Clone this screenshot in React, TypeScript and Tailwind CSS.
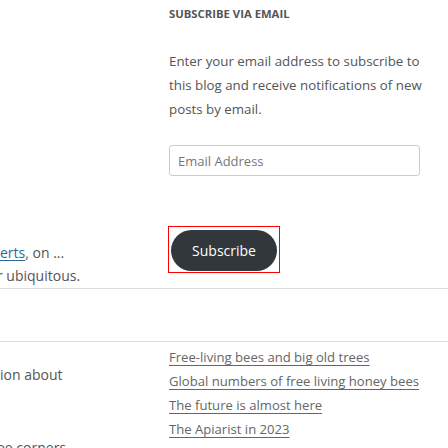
const links = [
  'Free-living bees and big old trees',
  'Global numbers of free living honey bees',
  'The future is almost here',
  'The Apiarist in 2023',
  'Eat your greens',
];

export default function App() {
  return (
    <div className="w-[448px] h-[448px] overflow-hidden bg-white font-['Open_Sans',sans-serif] text-[#555]">
      {/* top: end of a post on the left, subscribe widget on the right */}
      <div className="flex h-[288px]">
        <div className="w-[160px] shrink-0 overflow-hidden flex flex-col justify-end pb-[1px] text-[14px] leading-[23px]">
          <p className="whitespace-nowrap">
            <a href="#" className="text-[#2b6a94] underline underline-offset-2">erts</a>, on ...
          </p>
          <p className="whitespace-nowrap -ml-[3px]">r ubiquitous.</p>
        </div>
        <div className="flex-1 pl-[9px] pt-[7px] flex flex-col items-start">
          <h3 className="text-[11.3px] leading-[14px] font-bold uppercase">Subscribe via Email</h3>
          <p className="mt-[28px] text-[13.3px] leading-[24px] pr-4">
            Enter your email address to subscribe to this blog and receive notifications of new posts by email.
          </p>
          <div className="pt-[24px]">
            <input
              type="email"
              placeholder="Email Address"
              className="block w-[251px] h-[31px] px-[8px] border border-[#ccc] rounded-[3px] text-[13px] placeholder:text-[#777] outline-none"
            />
          </div>
          <div className="pt-[50px] -ml-px">
            <div className="border border-[#f00] pt-[3px] pb-[1px] px-[2px]">
              <button className="block w-[106px] h-[41px] rounded-full bg-[#32373c] text-[#fff] text-[14px] leading-none">
                Subscribe
              </button>
            </div>
          </div>
        </div>
      </div>

      <div className="h-[53px] border-t border-[#ddd]" />

      {/* bottom: post excerpt and recent posts list */}
      <div className="flex border-t border-[#ddd]">
        <div className="w-[160px] shrink-0 overflow-hidden pt-[21px] text-[14px] leading-[23px]">
          <p className="whitespace-nowrap">ion about</p>
          <p className="mt-[50px] whitespace-nowrap -ml-[3px]">ee corners</p>
        </div>
        <ul className="flex-1 pl-[9px] pt-[3px] text-[13.1px] leading-[24px] text-[#666]">
          {links.map((l) => (
            <li key={l}>
              <a href="#" className="underline underline-offset-[3px] decoration-[#666]">{l}</a>
            </li>
          ))}
        </ul>
      </div>
    </div>
  );
}
